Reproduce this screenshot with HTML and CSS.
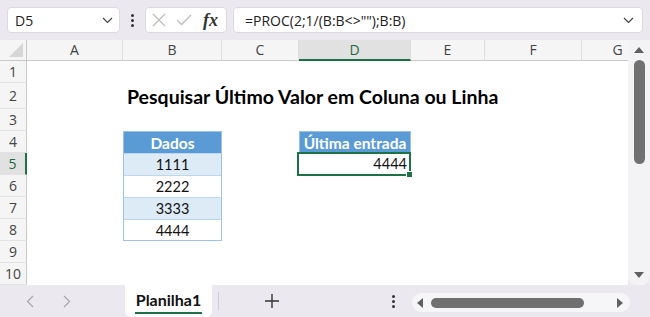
FILE: index.html
```html
<!DOCTYPE html>
<html lang="pt">
<head>
  <meta charset="UTF-8">
  <title>Planilha1</title>
  <link rel="stylesheet" href="styles.css">
</head>
<body>
  <header class="fbar">
    <div class="namebox">
      <span>D5</span>
      <svg width="11" height="7" viewBox="0 0 11 7"><polyline points="1,1 5.5,5.5 10,1" fill="none" stroke="#444" stroke-width="1.2"/></svg>
    </div>
    <div class="vdots"><i></i><i></i><i></i></div>
    <div class="fxbox">
      <svg width="14" height="14" viewBox="0 0 14 14"><path d="M1 1 L13 13 M13 1 L1 13" stroke="#bdbdbd" stroke-width="1.3"/></svg>
      <svg width="16" height="12" viewBox="0 0 16 12"><polyline points="1,6 5.5,10.5 15,1" fill="none" stroke="#bdbdbd" stroke-width="1.3"/></svg>
      <span class="fx">fx</span>
    </div>
    <div class="formula">
      <span>=PROC(2;1/(B:B&lt;&gt;"");B:B)</span>
      <svg width="11" height="7" viewBox="0 0 11 7"><polyline points="1,1 5.5,5.5 10,1" fill="none" stroke="#444" stroke-width="1.2"/></svg>
    </div>
  </header>

  <main class="body">
    <div class="sheet">
      <div class="grid">
        <div class="corner"></div><div class="ch">A</div><div class="ch">B</div><div class="ch">C</div><div class="ch sel">D</div><div class="ch">E</div><div class="ch">F</div><div class="ch">G</div>

        <div class="rh">1</div><div></div><div></div><div></div><div></div><div></div><div></div><div></div>

        <div class="rh">2</div><div></div><div class="title">Pesquisar Último Valor em Coluna ou Linha</div><div></div>

        <div class="rh">3</div><div></div><div></div><div></div><div></div><div></div><div></div><div></div>

        <div class="rh">4</div><div></div><div class="thead">Dados</div><div></div><div class="thead">Última entrada</div><div></div><div></div><div></div>

        <div class="rh sel">5</div><div></div><div class="tcell band">1111</div><div></div><div class="active">4444<i class="handle"></i></div><div></div><div></div><div></div>

        <div class="rh">6</div><div></div><div class="tcell">2222</div><div></div><div></div><div></div><div></div><div></div>

        <div class="rh">7</div><div></div><div class="tcell band">3333</div><div></div><div></div><div></div><div></div><div></div>

        <div class="rh">8</div><div></div><div class="tcell last">4444</div><div></div><div></div><div></div><div></div><div></div>

        <div class="rh">9</div><div></div><div></div><div></div><div></div><div></div><div></div><div></div>

        <div class="rh">10</div><div></div><div></div><div></div><div></div><div></div><div></div><div></div>
      </div>
    </div>
    <div class="vscroll">
      <span class="tri up"></span>
      <span class="vthumb"></span>
      <span class="tri down"></span>
    </div>
  </main>

  <footer class="tabs">
    <div class="nav">
      <svg width="8" height="13" viewBox="0 0 8 13"><polyline points="7,1 1.5,6.5 7,12" fill="none" stroke="#a8a8a8" stroke-width="1.2"/></svg>
      <svg width="8" height="13" viewBox="0 0 8 13"><polyline points="1,1 6.5,6.5 1,12" fill="none" stroke="#a8a8a8" stroke-width="1.2"/></svg>
    </div>
    <div class="tab"><span>Planilha1</span></div>
    <div class="sep"></div>
    <div class="add">
      <svg width="14" height="14" viewBox="0 0 14 14"><path d="M7 0 V14 M0 7 H14" stroke="#333" stroke-width="1.4"/></svg>
    </div>
    <div class="vdots small"><i></i><i></i><i></i></div>
    <div class="hscroll">
      <span class="tri left"></span>
      <span class="hthumb"></span>
      <span class="tri right"></span>
    </div>
  </footer>
</body>
</html>
```

FILE: styles.css
```css
html,body{  margin:0; padding:0; }
body{
  width:650px; height:317px; overflow:hidden;
  background:#ebe8ef; font-family:"Open Sans", "Noto Sans", sans-serif; color:#222;
}

/* formula bar */
.fbar{  height:40px; display:flex; align-items:center; padding:0 7px; box-sizing:border-box; }
.namebox,.fxbox,.formula{
  height:26px; background:#fff; border:1px solid #dcd9e0; border-radius:4px; box-sizing:border-box;
  display:flex; align-items:center;
}
.namebox{  width:113px; padding:0 6px 0 7px; justify-content:space-between; font-size:14px; }
.vdots{  width:25px; display:flex; flex-direction:column; align-items:center; gap:2px; }
.vdots>i{  width:3px; height:3px; background:#333; border-radius:50%; }
.fxbox{  width:82px; padding:0 6px 0 6px; gap:10px; }
.fxbox .fx{  font-family:"Liberation Serif", serif; font-style:italic; font-weight:bold; font-size:18px; color:#333; margin-left:1px; }
.formula{  flex:1; margin-left:6px; padding:0 8px 0 11px; justify-content:space-between; font-size:14px; }

/* sheet */
.body{  display:flex; height:245px; }
.sheet{  width:628px; overflow:hidden; background:#fff; }
.grid{
  display:grid;
  grid-template-columns:27px 96px 99px 77px 112px 74px 97px 72px;
  grid-template-rows:21px 22px 26px 22px 22px 22px 22px 22px 22px 22px 22px;
  width:654px;
}
.grid>div{  box-sizing:border-box; }
.corner{
  background:#f5f5f5; border-right:1px solid #c9c9c9; border-bottom:1px solid #c9c9c9; position:relative;
}
.corner::after{
  content:""; position:absolute; right:3px; bottom:3px;
  border-left:14px solid transparent; border-bottom:14px solid #d6d6d6;
}
.ch{
  background:#f5f5f5; border-right:1px solid #dedede; border-bottom:1px solid #c9c9c9;
  text-align:center; font-size:14px; line-height:20px; color:#444;
}
.ch.sel{  background:#e1e1e1; color:#1b6b3d; border-bottom:2px solid #1e7145; }
.rh{
  background:#f5f5f5; border-right:1px solid #c9c9c9; border-bottom:1px solid #e2e2e2;
  font-size:14px; color:#444; text-align:center; display:flex; align-items:center; justify-content:center;
}
.rh.sel{  background:#e1e1e1; color:#1b6b3d; border-right:2px solid #1e7145; }

.title{
  grid-column:span 5; padding-left:4px; white-space:nowrap;
  font-family:Lato, sans-serif; font-weight:bold; font-size:19.5px; line-height:28px; color:#000;
}
.thead{
  background:#5b9bd5; color:#fff; font-family:Lato, sans-serif; font-weight:bold; font-size:15.5px;
  text-align:center; line-height:22px; border:1px solid #9bc2e6; border-bottom:0; white-space:nowrap;
}
.tcell{
  font-family:Lato, sans-serif; font-size:14.5px; text-align:center; line-height:21px; color:#111;
  border-left:1px solid #9bc2e6; border-right:1px solid #9bc2e6; border-top:1px solid #bdd7ee;
}
.tcell.band{  background:#ddebf7; }
.tcell.last{  border-bottom:1px solid #9bc2e6; }
.active{
  position:relative; border:2px solid #1e7145; margin:-1px 0 -1px -2px;
  font-family:Lato, sans-serif; font-size:14.5px; text-align:right; line-height:20px; padding-right:2px; color:#111;
}
.handle{
  position:absolute; right:-4px; bottom:-4px; width:5px; height:5px; background:#1e7145; border:1px solid #fff;
}

/* vertical scrollbar */
.vscroll{
  width:22px; background:#f3f2f5; border-radius:0 0 8px 8px; position:relative;
  display:flex; flex-direction:column; align-items:center;
}
.tri{  width:0; height:0; display:block; }
.tri.up{  margin-top:7px; border-left:5px solid transparent; border-right:5px solid transparent; border-bottom:6px solid #606060; }
.vthumb{  width:11px; height:104px; margin-top:7px; background:#707070; border-radius:6px; }
.tri.down{  margin-top:auto; margin-bottom:7px; border-left:5px solid transparent; border-right:5px solid transparent; border-top:6px solid #606060; }

/* sheet tabs */
.tabs{  height:32px; display:flex; align-items:stretch; }
.nav{  width:125px; display:flex; align-items:center; gap:29px; padding-left:26px; box-sizing:border-box; }
.tab{
  width:87px; background:#fff; border-radius:0 0 6px 6px; display:flex; justify-content:center; align-items:center;
}
.tab>span{
  font-family:Lato, sans-serif; font-weight:bold; font-size:16px; color:#111;
  border-bottom:2px solid #1e7145; padding:0 1px 3px; margin-top:2px;
}
.sep{  width:1px; background:#cfccd3; margin:7px 0 7px 6px; }
.add{  width:106px; display:flex; align-items:center; justify-content:center; }
.vdots.small{  width:12px; justify-content:center; gap:2px; margin-left:auto; }
.hscroll{
  width:218px; margin:8px 20px 5px 13px; background:#f6f5f8; border-radius:10px;
  display:flex; align-items:center; padding:0 7px 0 5px; box-sizing:border-box;
}
.tri.left{  border-top:5px solid transparent; border-bottom:5px solid transparent; border-right:6px solid #606060; }
.hthumb{  width:153px; height:10px; margin-left:8px; background:#707070; border-radius:6px; }
.tri.right{  margin-left:auto; border-top:5px solid transparent; border-bottom:5px solid transparent; border-left:6px solid #606060; }
```
